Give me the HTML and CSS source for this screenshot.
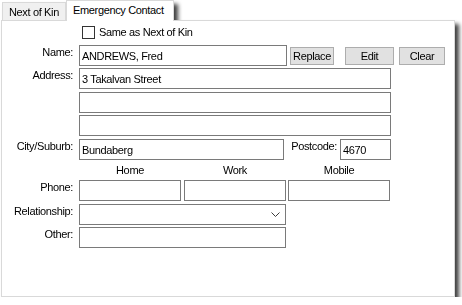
FILE: index.html
```html
<!DOCTYPE html>
<html lang="en">
<head>
  <meta charset="UTF-8">
  <title>Emergency Contact</title>
  <link rel="stylesheet" href="styles.css">
</head>
<body>
  <div class="window">
    <div class="tabs">
      <div class="tab tab-kin">Next of Kin</div>
      <div class="tab tab-active">Emergency Contact</div>
    </div>

    <div class="panel">
      <div class="row check-row">
        <span class="checkbox"></span>
        <span class="check-text">Same as Next of Kin</span>
      </div>

      <div class="row row-name">
        <label class="lbl">Name:</label>
        <input class="field w-name" type="text" value="ANDREWS, Fred">
        <button class="btn b-replace">Replace</button>
        <button class="btn b-edit">Edit</button>
        <button class="btn b-clear">Clear</button>
      </div>

      <div class="row row-addr1">
        <label class="lbl">Address:</label>
        <input class="field w-addr" type="text" value="3 Takalvan Street">
      </div>
      <div class="row row-addr2">
        <span class="lbl"></span>
        <input class="field w-addr" type="text" value="">
      </div>
      <div class="row row-addr3">
        <span class="lbl"></span>
        <input class="field w-addr" type="text" value="">
      </div>

      <div class="row row-city">
        <label class="lbl">City/Suburb:</label>
        <input class="field w-city" type="text" value="Bundaberg">
        <label class="pc-lbl">Postcode:</label>
        <input class="field w-pc" type="text" value="4670">
      </div>

      <div class="row row-heads">
        <span class="lbl"></span>
        <span class="head h-home">Home</span>
        <span class="head h-work">Work</span>
        <span class="head h-mobile">Mobile</span>
      </div>

      <div class="row row-phone">
        <label class="lbl">Phone:</label>
        <input class="field w-phone" type="text" value="">
        <input class="field w-phone p-work" type="text" value="">
        <input class="field w-phone p-mobile" type="text" value="">
      </div>

      <div class="row row-rel">
        <label class="lbl">Relationship:</label>
        <div class="field select w-rel">
          <svg class="chevron" width="9" height="6" viewBox="0 0 9 6">
            <polyline points="0.5,0.5 4.5,4.5 8.5,0.5" fill="none" stroke="#3c3c3c" stroke-width="1"/>
          </svg>
        </div>
      </div>

      <div class="row row-other">
        <label class="lbl">Other:</label>
        <input class="field w-rel" type="text" value="">
      </div>
    </div>
  </div>
</body>
</html>
```

FILE: styles.css
```css
body {
  margin: 0;
  font-family: "Liberation Sans", Arial, sans-serif;
  font-size: 11px;
  letter-spacing: -0.35px;
  color: #000;
  background-color: #fff;
}

.window {
  width: 454px;
  margin-left: 1px;
  filter: drop-shadow(4px 4px 2px rgba(0, 0, 0, 0.75));
}

/* tab strip */
.tabs {
  display: flex;
  align-items: flex-end;
  height: 20px;
}

.tab {
  box-sizing: border-box;
  height: 18px;
  border: 1px solid #d9d9d9;
  border-bottom: none;
  background-color: #f0f0f0;
  padding: 1px 0 0 6px;
  line-height: 16px;
  white-space: nowrap;
}

.tab-kin {
  width: 64px;
  margin-left: 1px;
}

.tab-active {
  position: relative;
  z-index: 1;
  width: 108px;
  height: 21px;
  margin-bottom: -1px;
  background-color: #fff;
  padding-left: 6px;
}

/* panel */
.panel {
  box-sizing: border-box;
  height: 277px;
  border: 1px solid #d9d9d9;
  background-color: #fff;
}

.row {
  display: flex;
  align-items: flex-start;
  height: 21px;
}

.lbl {
  flex: none;
  width: 71px;
  margin-right: 6px;
  text-align: right;
  line-height: 14px;
  white-space: nowrap;
}

.check-row {
  height: 13px;
  margin-top: 5px;
  padding-left: 80px;
  align-items: center;
}

.checkbox {
  box-sizing: border-box;
  width: 13px;
  height: 13px;
  border: 1px solid #333;
  background-color: #fff;
}

.check-text {
  margin-left: 4px;
  line-height: 13px;
}

.row-name { margin-top: 6px; }
.row-addr1 { margin-top: 2px; }
.row-addr2 { margin-top: 3px; }
.row-addr3 { margin-top: 2px; }
.row-city { margin-top: 3px; }
.row-heads { height: 20px; }
.row-rel { margin-top: 3px; }
.row-other { margin-top: 2px; }

.field {
  box-sizing: border-box;
  flex: none;
  height: 21px;
  margin: 0;
  padding: 0 2px;
  border: 1px solid #7a7a7a;
  border-radius: 0;
  background-color: #fff;
  font: inherit;
  letter-spacing: inherit;
  color: #000;
  outline: none;
}

.w-name { width: 208px; }
.w-addr { width: 312px; }
.w-city { width: 205px; }
.w-pc { width: 51px; }
.w-phone { width: 102px; }
.p-work { margin-left: 3px; }
.p-mobile { margin-left: 2px; }
.w-rel { width: 207px; }

.btn {
  box-sizing: border-box;
  flex: none;
  height: 18px;
  margin-top: 2px;
  padding: 0;
  border: 1px solid #adadad;
  border-radius: 0;
  background-color: #e1e1e1;
  font: inherit;
  letter-spacing: inherit;
  color: #000;
}

.b-replace { width: 44px; margin-left: 3px; }
.b-edit { width: 49px; margin-left: 11px; }
.b-clear { width: 46px; margin-left: 5px; }

.pc-lbl {
  flex: none;
  box-sizing: border-box;
  width: 53px;
  margin-left: 3px;
  padding-right: 3px;
  text-align: right;
  line-height: 14px;
}

.head {
  flex: none;
  width: 102px;
  text-align: center;
  line-height: 20px;
}

.h-work { margin-left: 3px; }
.h-mobile { margin-left: 2px; }

.select {
  display: flex;
  align-items: center;
  justify-content: flex-end;
  padding-right: 5px;
}

.chevron {
  display: block;
}
```
